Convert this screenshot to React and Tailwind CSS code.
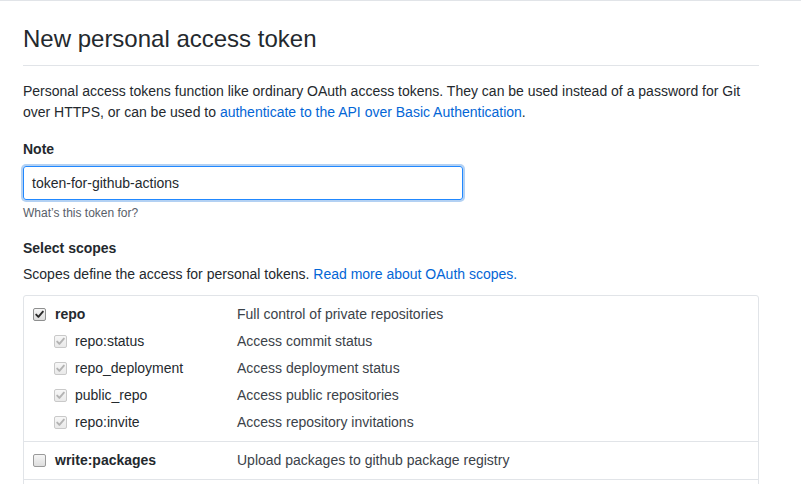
import React from "react";

const font = { fontFamily: '"Liberation Sans", Arial, sans-serif' };

function Check({ color }) {
  return (
    <svg width="11" height="11" viewBox="0 0 11 11" className="block">
      <path d="M2.2 5.6 L4.4 7.9 L8.9 2.6" fill="none" stroke={color} strokeWidth="1.9" strokeLinecap="round" strokeLinejoin="round" />
    </svg>
  );
}

function Box({ state }) {
  if (state === "checked")
    return (
      <span className="flex h-[13px] w-[13px] shrink-0 items-center justify-center rounded-[2px] border border-[#8e8f8f] bg-gradient-to-b from-[#f6f6f6] to-[#dcdcdc]">
        <Check color="#2b2b2b" />
      </span>
    );
  if (state === "disabled")
    return (
      <span className="flex h-[13px] w-[13px] shrink-0 items-center justify-center rounded-[2px] border border-[#c9c9c9] bg-gradient-to-b from-[#f7f7f7] to-[#e9e9e9]">
        <Check color="#b3b3b3" />
      </span>
    );
  return (
    <span className="block h-[13px] w-[13px] shrink-0 rounded-[2px] border border-[#9a9a9a] bg-gradient-to-b from-[#f5f5f5] to-[#dedede]" />
  );
}

function Row({ state, name, desc, bold, sub }) {
  return (
    <div className="flex h-[27px] items-center">
      <div className={sub ? "flex w-[204px] items-center pl-[21px]" : "flex w-[204px] items-center"}>
        <Box state={state} />
        <span className={bold ? "ml-[9px] font-bold text-[#24292e]" : "ml-[8px] text-[#24292e]"}>{name}</span>
      </div>
      <span className="text-[#3b4249]">{desc}</span>
    </div>
  );
}

export default function App() {
  return (
    <div className="h-[484px] overflow-hidden border-t border-[#e1e4e8] bg-white text-[14px] leading-[21px] text-[#24292e]" style={font}>
      <div className="ml-[23px] w-[736px] pt-[20px]">
        <div className="border-b border-[#e1e4e8] pb-[8px]">
          <h1 className="text-[24px] font-normal leading-[36px]">New personal access token</h1>
        </div>
        <p className="mt-[15px] leading-[21px]">
          Personal access tokens function like ordinary OAuth access tokens. They can be used instead of a password for Git over HTTPS, or can be used to{" "}
          <a className="text-[#0366d6]">authenticate to the API over Basic Authentication</a>.
        </p>
        <div className="mt-[16px] font-bold">Note</div>
        <div className="mt-[6px] flex h-[34px] w-[440px] items-center rounded-[3px] border border-[#2188ff] px-[8px] shadow-[0_0_0_2px_rgba(3,102,214,0.3)]">
          token-for-github-actions
        </div>
        <p className="mt-[4px] text-[12px] leading-[18px] text-[#586069]">What’s this token for?</p>
        <div className="mt-[16px] font-bold">Select scopes</div>
        <p className="mt-[5px]">
          Scopes define the access for personal tokens.{" "}
          <a className="text-[#0366d6]">Read more about OAuth scopes.</a>
        </p>
        <div className="mt-[10px] rounded-[3px] border border-[#e1e4e8]">
          <div className="pb-[5px] pl-[9px] pt-[5px]">
            <Row state="checked" name="repo" desc="Full control of private repositories" bold />
            <Row state="disabled" name="repo:status" desc="Access commit status" sub />
            <Row state="disabled" name="repo_deployment" desc="Access deployment status" sub />
            <Row state="disabled" name="public_repo" desc="Access public repositories" sub />
            <Row state="disabled" name="repo:invite" desc="Access repository invitations" sub />
          </div>
          <div className="border-t border-[#e1e4e8] pb-[5px] pl-[9px] pt-[5px]">
            <Row state="unchecked" name="write:packages" desc="Upload packages to github package registry" bold />
          </div>
          <div className="h-[37px] border-t border-[#e1e4e8]" />
        </div>
      </div>
    </div>
  );
}
